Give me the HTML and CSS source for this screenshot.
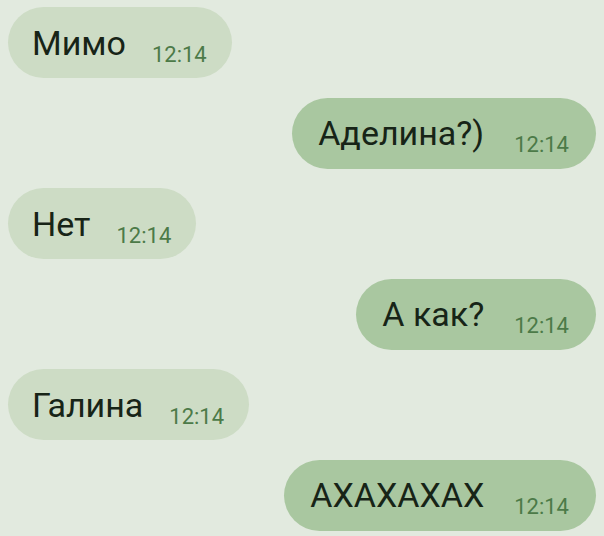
FILE: index.html
```html
<!DOCTYPE html>
<html>
<head>
  <title>Чат</title>
  <link rel="stylesheet" href="styles.css">
</head>
<body>
  <div class="chat">
    <div class="msg in"><span class="text">Мимо</span><span class="time">12:14</span></div>
    <div class="msg out"><span class="text">Аделина?)</span><span class="time">12:14</span></div>
    <div class="msg in"><span class="text">Нет</span><span class="time">12:14</span></div>
    <div class="msg out"><span class="text">А как?</span><span class="time">12:14</span></div>
    <div class="msg in"><span class="text">Галина</span><span class="time">12:14</span></div>
    <div class="msg out"><span class="text">АХАХАХАХ</span><span class="time">12:14</span></div>
  </div>
</body>
</html>
```

FILE: styles.css
```css
body {
  margin: 0;
  background: #e2eadf;
  font-family: 'Roboto', 'Noto Sans', sans-serif;
}
.chat {
  display: flex;
  flex-direction: column;
  gap: 19.6px;
  padding: 7px 8px;
}
.msg {
  display: flex;
  align-items: center;
  height: 71px;
  padding: 0 25px 0 24px;
  border-radius: 36px;
  box-sizing: border-box;
}
.msg.in {
  align-self: flex-start;
  background: #cddcc5;
}
.msg.out {
  align-self: flex-end;
  padding: 0 27px 0 26px;
  background: #a9c7a0;
}
.text {
  font-size: 34px;
  color: #172417;
}
.time {
  font-size: 22px;
  color: #4c7a48;
  margin-left: 26px;
  margin-top: 23px;
}
.out .time {
  margin-left: 30px;
}
```
